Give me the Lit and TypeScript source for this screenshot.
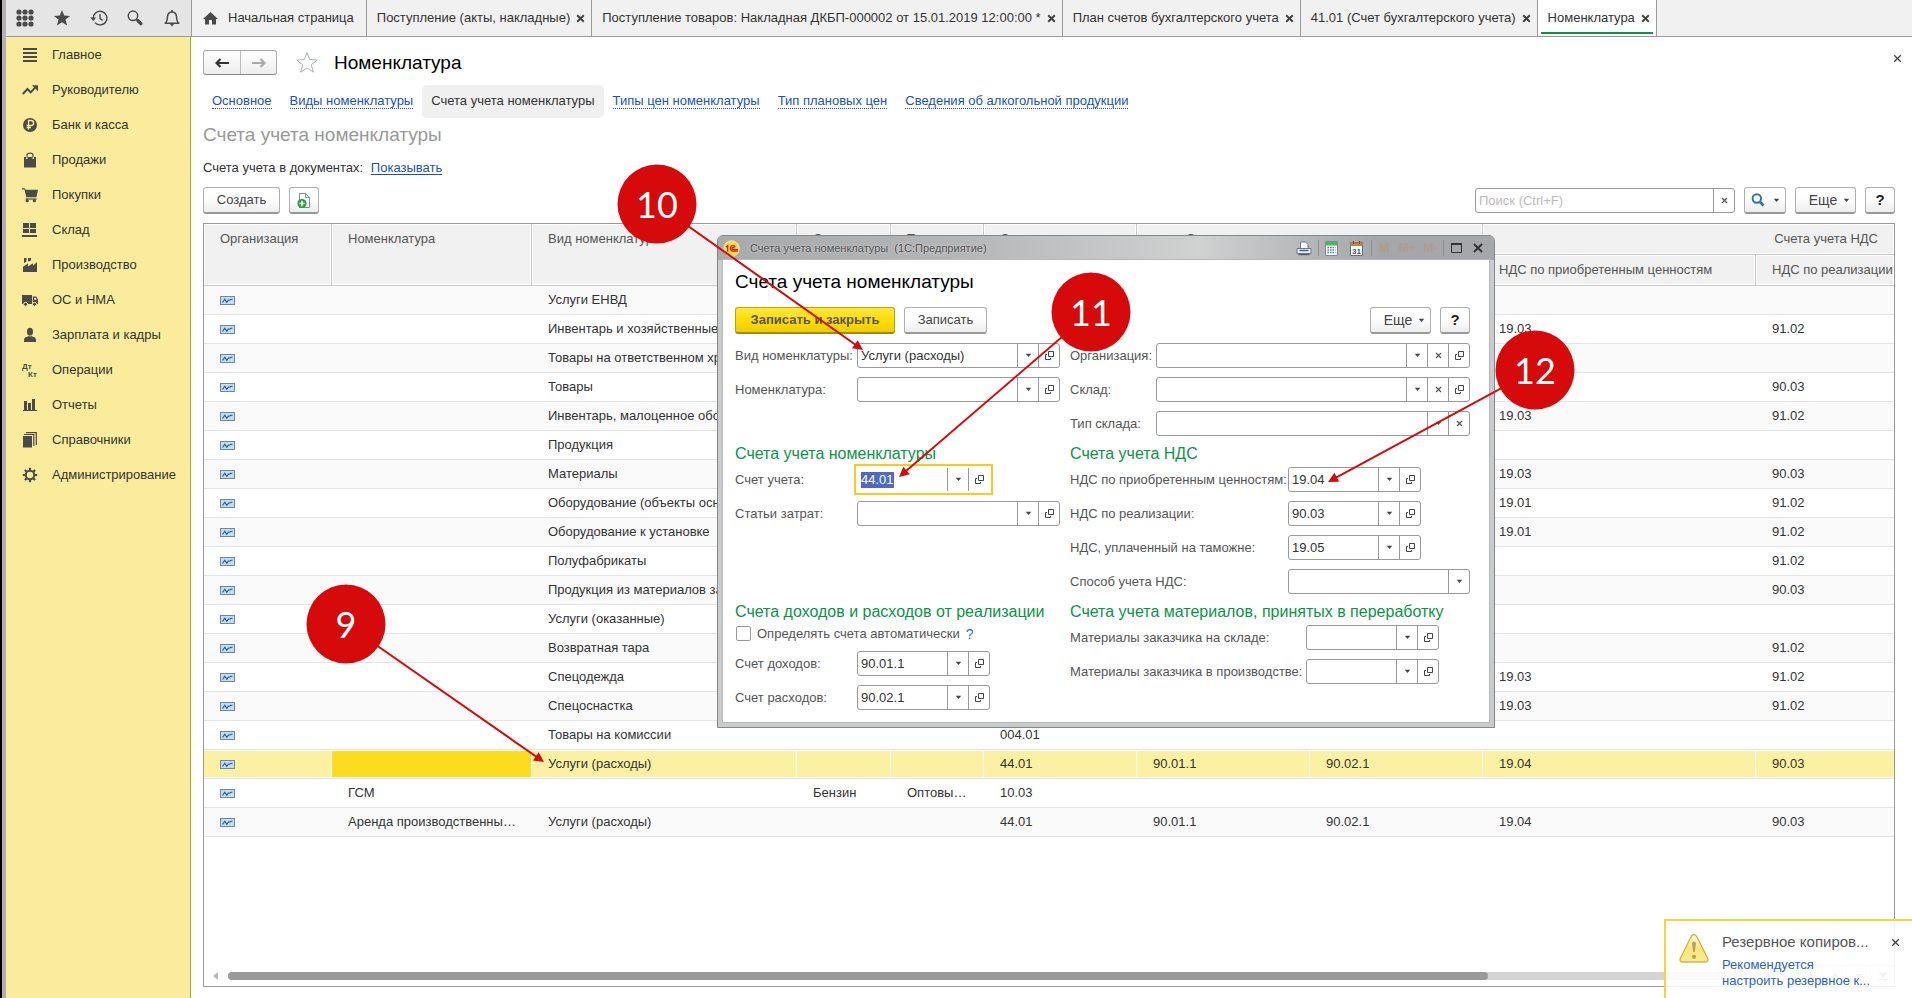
import { LitElement, html, svg, css, nothing } from "lit";
import { customElement, query } from "lit/decorators.js";
import { classMap } from "lit/directives/class-map.js";

const icon = (w: number, h: number, body: unknown) =>
  html`<svg class="ico" width=${w} height=${h} viewBox="0 0 ${w} ${h}" aria-hidden="true">${body}</svg>`;

const cross = (bold = false) =>
  icon(9, 9, svg`<path d="M1.2 1.2 7.8 7.8M7.8 1.2 1.2 7.8" fill="none" stroke="#444" stroke-width=${bold ? 2 : 1.3} />`);

const smallCross = icon(7, 7, svg`<path d="M1 1 6 6M6 1 1 6" fill="none" stroke="#555" stroke-width="1.2"/>`);
const caret = icon(7, 5, svg`<path d="M0.8 0.8h5.4L3.5 4z" fill="#444"/>`);
const openIcon = icon(11, 11, svg`<path d="M4.500 1.500h5v5h-5zM3 4.500H1.500v5h5V8" fill="none" stroke="#444"/>`);

const tools = [
  { label: "Меню", art: icon(18, 18, svg`<g fill="#4a4a4a">${[3, 9, 15].map((y) => [3, 9, 15].map((x) => svg`<circle cx=${x} cy=${y} r="2.6"/>`))}</g>`) },
  { label: "Избранное", art: icon(18, 18, svg`<path d="M9 1l2.200 5.600 5.900.3-4.600 3.700 1.600 5.900L9 13.200l-5.100 3.300 1.600-5.900L.9 6.900l5.900-.3z" fill="#4a4a4a"/>`) },
  { label: "История", art: icon(18, 18, svg`<path d="M3.300 9.500A6.800 6.800 0 1 1 5 13.600M10 5v4.600l2.600 1.800" fill="none" stroke="#4a4a4a" stroke-width="1.400"/><path d="M.2 8.500h6l-3 3.400z" fill="#4a4a4a"/>`) },
  { label: "Поиск", art: icon(18, 18, svg`<circle cx="7" cy="6.800" r="4.700" fill="none" stroke="#4a4a4a" stroke-width="1.500"/><path d="M10.300 10.300l1.800 1.600" stroke="#4a4a4a" stroke-width="1.300"/><path d="M12 11.800l2.900 2.800" stroke="#4a4a4a" stroke-width="3.400" stroke-linecap="round"/>`) },
  { label: "Уведомления", art: icon(18, 18, svg`<path d="M2.300 14.200c2-1.600 2-3 2.100-5.700C4.500 5 6.300 3.100 9 3.100s4.500 1.900 4.600 5.400c.1 2.700.1 4.100 2.100 5.700z" fill="none" stroke="#4a4a4a" stroke-width="1.500" stroke-linejoin="round"/><path d="M9 1v2" stroke="#4a4a4a" stroke-width="1.800"/><path d="M6.800 14.800h4.400L9 17.400z" fill="#4a4a4a"/>`) },
];

const tabs = [
  { text: "Поступление (акты, накладные)" },
  { text: "Поступление товаров: Накладная ДКБП-000002 от 15.01.2019 12:00:00 *" },
  { text: "План счетов бухгалтерского учета" },
  { text: "41.01 (Счет бухгалтерского учета)" },
  { text: "Номенклатура", active: true },
];

const k = "#4a4a4a";
const sections = [
  { text: "Главное", art: svg`<path d="M1 1h14v2H1zM1 5h14v2H1zM1 9h14v2H1zM1 13h14v2H1z" fill=${k}/>` },
  { text: "Руководителю", art: svg`<path d="M.8 12l4.700-5 3.200 3.400 4.600-5" fill="none" stroke=${k} stroke-width="2"/><path d="M10 3.200h6v6z" fill=${k}/>` },
  { text: "Банк и касса", art: svg`<circle cx="8" cy="8" r="7" fill=${k}/><path d="M6.500 12.500v-9h2.600a2.500 2.500 0 0 1 0 5H4.700M4.700 10.500h4.300" fill="none" stroke="#faec9c" stroke-width="1.300"/>` },
  { text: "Продажи", art: svg`<path d="M2 5h2v2h1.500V5h5v2H12V5h2v10.500H2z" fill=${k}/><path d="M5 5.500V3.200C5 1.800 6 1.200 8 1.200s3 .6 3 2v2.300" fill="none" stroke=${k} stroke-width="1.200"/>` },
  { text: "Покупки", art: svg`<path d="M0 1.200h2.800l.6 1.600H16l-1.600 7.400H4.300L2.400 2.600H0z" fill=${k}/><path d="M3.600 12h11" stroke=${k} stroke-width="1.200"/><circle cx="5.200" cy="13.700" r="1.600" fill=${k}/><circle cx="12.400" cy="13.700" r="1.600" fill=${k}/>` },
  { text: "Склад", art: svg`<path d="M1 1h6v5H1zM8 1h6v5H8zM1 7h6v4H1zM8 7h6v4H8zM0 13h15v2H0z" fill=${k}/>` },
  { text: "Производство", art: svg`<path d="M1 15V9.800l5-3.400v3l5-3.200v2.500L15 5v10zM2 1h2.500v3.500L2 6zM6 1h3v2.500L6 4.500z" fill=${k}/>` },
  { text: "ОС и НМА", art: svg`<path d="M0 3h10v9H0zM10.800 4.500h3.400L16 7.500V12h-5.200z" fill=${k}/><path d="M12 5.800h1.700l1 2H12z" fill="#faec9c"/><circle cx="3.500" cy="12.300" r="2" fill=${k} stroke="#faec9c"/><circle cx="12.500" cy="12.300" r="2" fill=${k} stroke="#faec9c"/>` },
  { text: "Зарплата и кадры", art: svg`<ellipse cx="8" cy="4.700" rx="3" ry="3.900" fill=${k}/><path d="M2 15v-2.600c0-2 2.600-2.800 4.400-3.200h3.200c1.800.4 4.400 1.200 4.400 3.200V15z" fill=${k}/>` },
  { text: "Операции", art: svg`<text x="0" y="7" font-size="8" font-weight="bold" fill=${k}>Дт</text><text x="6" y="15" font-size="8" font-weight="bold" fill=${k}>Кт</text>` },
  { text: "Отчеты", art: svg`<path d="M2 4h3v9H2zM6 6h3v7H6zM10 2h3v11h-3zM1 13h14v1H1z" fill=${k}/>` },
  { text: "Справочники", art: svg`<path d="M1 4h9v11.500H1z" fill=${k}/><path d="M2 2.500h9.800V14M4 .6h10.300V13" fill="none" stroke=${k} stroke-width="1.200"/>` },
  { text: "Администрирование", art: svg`<circle cx="8" cy="8" r="4.200" fill="none" stroke=${k} stroke-width="2"/><g stroke=${k} stroke-width="2.200">${[0, 45, 90, 135, 180, 225, 270, 315].map((a) => svg`<path d="M8 .8v2.400" transform="rotate(${a} 8 8)"/>`)}</g>` },
];

const navLinks = [
  { text: "Основное" },
  { text: "Виды номенклатуры" },
  { text: "Счета учета номенклатуры", active: true },
  { text: "Типы цен номенклатуры" },
  { text: "Тип плановых цен" },
  { text: "Сведения об алкогольной продукции" },
];

interface Row {
  item?: string; kind?: string; store?: string; storeType?: string;
  account?: string; income?: string; expense?: string; vatIn?: string; vatOut?: string; selected?: boolean;
}

const rows: Row[] = [
  { kind: "Услуги ЕНВД" },
  { kind: "Инвентарь и хозяйственные принадлежности", vatIn: "19.03", vatOut: "91.02" },
  { kind: "Товары на ответственном хранении" },
  { kind: "Товары", vatOut: "90.03" },
  { kind: "Инвентарь, малоценное оборудование", vatIn: "19.03", vatOut: "91.02" },
  { kind: "Продукция" },
  { kind: "Материалы", vatIn: "19.03", vatOut: "90.03" },
  { kind: "Оборудование (объекты основных средств)", vatIn: "19.01", vatOut: "91.02" },
  { kind: "Оборудование к установке", vatIn: "19.01", vatOut: "91.02" },
  { kind: "Полуфабрикаты", vatOut: "91.02" },
  { kind: "Продукция из материалов заказчика", vatOut: "90.03" },
  { kind: "Услуги (оказанные)" },
  { kind: "Возвратная тара", vatOut: "91.02" },
  { kind: "Спецодежда", vatIn: "19.03", vatOut: "91.02" },
  { kind: "Спецоснастка", vatIn: "19.03", vatOut: "91.02" },
  { kind: "Товары на комиссии", account: "004.01" },
  { kind: "Услуги (расходы)", account: "44.01", income: "90.01.1", expense: "90.02.1", vatIn: "19.04", vatOut: "90.03", selected: true },
  { item: "ГСМ", store: "Бензин", storeType: "Оптовый склад", account: "10.03" },
  { item: "Аренда производственных помещений", kind: "Услуги (расходы)", account: "44.01", income: "90.01.1", expense: "90.02.1", vatIn: "19.04", vatOut: "90.03" },
];

const entryIcon = icon(15, 9, svg`<rect x=".5" y=".5" width="14" height="8" fill="#c3dcf2" stroke="#6f87a0"/><path d="M2.500 6.500l2.300-3.300 2 3 1.700-2.200h1.500l1-.8h1.500" fill="none" stroke="#1c5c9c" stroke-width="1.100"/>`);

type FieldButton = "list" | "clear" | "open";
const buttonArt = { list: caret, clear: smallCross, open: openIcon };
const buttonLabel = { list: "Выбрать из списка", clear: "Очистить", open: "Открыть" };

const field = (id: string, label: string, value: string, size: string, buttons: FieldButton[], focused = false) => html`
  <div class="field">
    <label for=${id}>${label}</label>
    <div class=${classMap({ combo: true, [size]: true, focused })}>
      <input id=${id} type="text" autocomplete="off" .value=${value} />
      ${buttons.map((b) => html`<button type="button" aria-label="${buttonLabel[b]}: ${label}">${buttonArt[b]}</button>`)}
    </div>
  </div>`;

const callouts = [
  { n: 9, x: 346, y: 624, tx: 544, ty: 762 },
  { n: 10, x: 657, y: 204, tx: 863, ty: 350 },
  { n: 11, x: 1091, y: 312, tx: 899, ty: 477 },
  { n: 12, x: 1535, y: 370, tx: 1328, ty: 482 },
];

const arrow = (c: (typeof callouts)[number]) => {
  const angle = (Math.atan2(c.ty - c.y, c.tx - c.x) * 180) / Math.PI;
  const length = Math.hypot(c.ty - c.y, c.tx - c.x);
  return svg`<g transform="translate(${c.x} ${c.y}) rotate(${angle})">
    <path d="M0 0H${length - 7}" stroke="#d60a0a" stroke-width="2"/>
    <path d="M${length} 0l-10-5v10z" fill="#d60a0a"/>
  </g>`;
};

@customElement("app-root")
export class AppRoot extends LitElement {
  static styles = css`
    :host {
      display: block;
      position: relative;
      height: 100vh;
      overflow: hidden;
      background: #fff;
      color: #333;
      font: 13px/16px "Liberation Sans", Arial, sans-serif;
    }
    * { box-sizing: border-box; }
    button, input { font: inherit; color: inherit; margin: 0; }
    button { cursor: pointer; padding: 0; border: 0; background: none; display: inline-flex; align-items: center; justify-content: center; }
    input { border: 0; outline: 0; background: none; min-width: 0; }
    .ico { display: block; flex: none; }
    .app { display: flex; flex-direction: column; height: 100%; border-left: 2px solid #000; box-shadow: inset 4px 0 #b3afb3; padding-left: 4px; }
    .top { display: flex; height: 37px; flex: none; background: #f1f1f1; border-bottom: 1px solid #999; }
    .tools { width: 185px; flex: none; display: flex; align-items: center; justify-content: space-between; padding: 0 9px; background: #e5e5e5; }
    .tools button { width: 20px; height: 36px; }
    .tab { display: flex; align-items: center; gap: 6px; padding: 0 6px 0 10px; border-left: 1px solid #999; white-space: nowrap; height: 36px; }
    .tab.home { gap: 10px; padding-left: 11px; padding-right: 12px; }
    .tab.active { background: #fff; border-right: 1px solid #999; position: relative; }
    .tab.active::after { content: ""; position: absolute; left: 3px; right: 3px; bottom: 2px; height: 2px; background: #0b9447; }
    .body { flex: 1; display: flex; min-height: 0; }
    .side { width: 185px; flex: none; background: #faec9c; border-right: 1px solid #c0a416; }
    .side a { display: flex; align-items: center; gap: 14px; height: 35px; padding-left: 16px; color: #333; text-decoration: none; }
    .main { flex: 1; min-width: 0; display: flex; flex-direction: column; padding: 0 17px 11px 12px; }
    .head { height: 48px; display: flex; align-items: center; padding-top: 3px; flex: none; }
    .nav { display: flex; height: 25px; border: 1px solid #aaa; border-bottom-color: #888; border-radius: 3px; background: linear-gradient(#fff, #ededed); }
    .nav button { width: 36px; }
    .nav button + button { border-left: 1px solid #bbb; }
    .star { margin: 0 15px 0 18px; }
    h1, h2, h3 { margin: 0; font-weight: normal; }
    h1 { font-size: 19px; line-height: 24px; color: #000; flex: 1; }
    .close { width: 20px; height: 20px; margin-right: -12px; margin-top: -8px; }
    .links { display: flex; height: 33px; flex: none; }
    .links a { display: flex; align-items: center; padding: 0 9px; color: #1a52b8; text-decoration: none; white-space: nowrap; }
    .links span { border-bottom: 1px dotted #1a52b8; line-height: 14px; }
    .links a.active { background: #f0f0f0; border-radius: 5px; color: #333; }
    .links a.active span { border-color: transparent; }
    .subtitle { font-size: 19px; line-height: 33px; color: #999; flex: none; }
    .mode { line-height: 34px; flex: none; }
    .mode a { color: #1a52b8; margin-left: 4px; text-underline-offset: 2px; }
    .bar { display: flex; align-items: center; gap: 9px; height: 27px; margin: 2px 0 9px; flex: none; }
    .btn { height: 27px; border: 1px solid #b0b0b0; border-bottom: 2px solid #999; border-radius: 3px; background: linear-gradient(#fff 40%, #eee); padding: 0 12px; color: #444; }
    .btn.more { width: 61px; padding: 0 4px 0 12px; gap: 6px; font-size: 14px; }
    .btn.help { width: 30px; padding: 0; font-size: 15px; font-weight: bold; color: #222; }
    .btn.find { width: 42px; padding: 0; gap: 8px; }
    .btn.doc { width: 30px; padding: 0; }
    .btn.create { width: 77px; padding: 0; }
    .search { margin-left: auto; width: 260px; }
    .search input::placeholder { color: #bbb; opacity: 1; }
    .combo { display: flex; height: 25px; border: 1px solid #999; border-radius: 3px; background: #fff; }
    .combo input { flex: 1; padding: 0 3px; }
    .combo button { width: 21px; flex: none; border-left: 1px solid #999; }
    .grid { flex: 1; min-height: 0; border: 1px solid #999; display: flex; flex-direction: column; overflow: hidden; }
    table { width: 100%; table-layout: fixed; border-collapse: separate; border-spacing: 0; }
    .c1 { width: 128px; } .c2 { width: 200px; } .c3 { width: 265px; } .c4 { width: 94px; } .c5 { width: 93px; }
    .c6 { width: 153px; } .c7 { width: 173px; } .c8 { width: 173px; } .c9 { width: 273px; }
    th, td { padding: 0 12px 0 16px; text-align: left; font-weight: normal; white-space: nowrap; overflow: hidden; text-overflow: ellipsis; }
    th { background: #f1f1f1; color: #555; height: 31px; border-right: 1px solid #c8c8c8; border-bottom: 1px solid #c8c8c8; box-shadow: inset 0 0 0 1px #fff; }
    th.tall { vertical-align: top; padding-top: 7px; height: 61px; }
    th.center { text-align: center; }
    th.last { border-right: 0; padding-right: 0; }
    th.right { text-align: right; padding-right: 16px; border-right: 0; }
    td { height: 29px; border-bottom: 1px solid #e4e4e4; }
    tr:nth-child(odd) td { background: #fafafa; }
    tr.selected td { background: #fcf0a2; border-right: 1px solid #fff; box-shadow: inset 0 1px #fff, inset 0 -1px #fff; }
    tr.selected td.current { background: #fcdc1e; }
    tr.selected td:last-child { border-right: 0; }
    .scroll { margin-top: auto; height: 21px; display: flex; align-items: center; padding-left: 9px; gap: 10px; flex: none; }
    .track { width: 1528px; flex: 0 1 auto; height: 8px; border-radius: 4px; background: #d4d4d4; }
    .thumb { width: 1260px; max-width: 83%; height: 8px; border-radius: 4px; background: #999; }
    .steps { display: flex; margin-left: auto; align-self: stretch; border-top: 1px solid #ccc; }
    .steps button { width: 24px; border-left: 1px solid #ccc; }

    .dialog { position: absolute; left: 717px; top: 235px; width: 778px; border: 1px solid #858789; border-radius: 6px 6px 0 0; background: #c9cbcd; padding: 0 5px 5px; }
    .caption { display: flex; align-items: center; height: 24px; margin: 0 -5px; padding: 0 5px; font-size: 11px; color: #555; border-radius: 5px 5px 0 0; background: linear-gradient(90deg, #a8aaac, #b4b5b7 30%, #d0d1d1 62%, #a4a6a9 85%, #a6a7aa); white-space: pre; }
    .caption .name { flex: 1; margin-left: 10px; text-shadow: 0 0 3px #ddd; }
    .caption button { height: 22px; width: 22px; }
    .caption .sep { width: 1px; height: 16px; background: #8c8e90; margin: 0 1px; }
    .caption .mem { width: 23px; color: #b09c90; font-weight: bold; font-size: 12px; }
    .caption .print { width: 26px; }
    .caption .cal { width: 28px; }
    .sheet { background: #fff; padding: 0 19px 12px 12px; box-shadow: 0 0 0 1px #b6b8ba; }
    .sheet h2 { font-size: 19px; line-height: 44px; color: #000; }
    .cmds { display: flex; gap: 9px; margin-top: 3px; margin-bottom: 9px; }
    .cmds .primary { width: 160px; padding: 0; font-weight: bold; color: #555; background: linear-gradient(#ffe83c, #ffdc00 55%, #f0cc00); border-color: #c0a010; border-bottom-color: #a08a10; }
    .cmds .save { width: 83px; padding: 0; }
    .cmds .more { margin-left: auto; }
    form { display: grid; grid-template-columns: 325px minmax(0, 1fr); column-gap: 10px; }
    fieldset { border: 0; margin: 0; padding: 0; min-width: 0; display: flex; flex-direction: column; gap: 9px; }
    .group { display: flex; flex-direction: column; min-width: 0; }
    h3 { font-size: 16px; line-height: 22px; padding: 7px 0 2px; color: #0b9447; white-space: nowrap; }
    .field { display: flex; align-items: center; height: 25px; color: #555; }
    .field label { width: 122px; flex: none; white-space: nowrap; }
    .field input { color: #333; }
    .narrow label { width: 86px; }
    .vat label { width: 218px; }
    .mat label { width: 236px; }
    .long { width: 203px; }
    .fill { flex: 1; min-width: 0; }
    .short { width: 133px; }
    .focused { border-color: transparent; border-radius: 0; outline: 2px solid #fcc91e; outline-offset: 1px; }
    .focused input::selection { background: #5069c4; color: #fff; }
    .check { display: flex; align-items: center; height: 17px; margin-bottom: 9px; color: #555; }
    .check input { appearance: none; width: 15px; height: 15px; border: 1px solid #999; border-radius: 2px; margin: 0 6px 0 1px; }
    .check a { color: #1a7ac0; text-decoration: none; margin-left: 6px; font-size: 14px; }

    .toast { position: absolute; right: 0; bottom: 0; width: 248px; height: 79px; border: solid #fcd23c; border-width: 2px 0 0 2px; background: rgba(255, 255, 255, 0.87); display: grid; grid-template-columns: 56px 1fr 34px; padding-top: 11px; }
    .toast .warn { margin: 1px 0 0 13px; }
    .toast strong { font-weight: normal; font-size: 15px; line-height: 20px; color: #555; display: block; }
    .toast a { color: #2c62be; text-decoration: none; line-height: 16px; display: block; margin-top: 5px; white-space: nowrap; }
    .toast button { height: 20px; }
    .marks { position: absolute; left: 0; top: 0; width: 100%; height: 100%; pointer-events: none; }
    .marks text { font: 36px Lato, sans-serif; fill: #fff; text-anchor: middle; }
  `;

  @query("#account") private account!: HTMLInputElement;

  firstUpdated() {
    this.account.focus();
    this.account.select();
  }

  private renderTop() {
    return html`<header class="top">
      <div class="tools">${tools.map((t) => html`<button aria-label=${t.label}>${t.art}</button>`)}</div>
      <div class="tab home">
        ${icon(15, 14, svg`<path d="M7.500 1 15 8h-2v5.500H9V9H6v4.500H2V8H0z" fill="#4a4a4a"/>`)}
        <span>Начальная страница</span>
      </div>
      ${tabs.map((t) => html`<div class=${classMap({ tab: true, active: !!t.active })}>
        <span>${t.text}</span><button aria-label="Закрыть вкладку">${cross(true)}</button>
      </div>`)}
    </header>`;
  }

  private renderTable() {
    return html`<div class="grid">
      <table>
        <colgroup>${[1, 2, 3, 4, 5, 6, 7, 8, 9, 10].map((n) => html`<col class="c${n}" />`)}</colgroup>
        <thead>
          <tr>
            <th class="tall" rowspan="2">Организация</th>
            <th class="tall" rowspan="2">Номенклатура</th>
            <th class="tall" rowspan="2">Вид номенклатуры</th>
            <th class="tall" rowspan="2">Склад</th>
            <th class="tall" rowspan="2">Тип склада</th>
            <th class="tall" rowspan="2">Счет учета</th>
            <th class="center" colspan="2">Счета доходов и расходов от реализации</th>
            <th class="right" colspan="2">Счета учета НДС</th>
          </tr>
          <tr><th>Доходов</th><th>Расходов</th><th>НДС по приобретенным ценностям</th><th class="last">НДС по реализации</th></tr>
        </thead>
        <tbody>
          ${rows.map((r) => html`<tr class=${r.selected ? "selected" : nothing}>
            <td>${entryIcon}</td>
            <td class=${r.selected ? "current" : nothing}>${r.item}</td>
            <td>${r.kind}</td><td>${r.store}</td><td>${r.storeType}</td><td>${r.account}</td>
            <td>${r.income}</td><td>${r.expense}</td><td>${r.vatIn}</td><td>${r.vatOut}</td>
          </tr>`)}
        </tbody>
      </table>
      <div class="scroll">
        ${icon(5, 8, svg`<path d="M5 0v8L0 4z" fill="#bbb"/>`)}
        <div class="track"><div class="thumb"></div></div>
        ${icon(5, 8, svg`<path d="M0 0v8l5-4z" fill="#999"/>`)}
        <div class="steps">
          <button aria-label="В начало">${icon(10, 8, svg`<path d="M0 1h10M5 2l4 5H1z" stroke="#999" fill="#999"/>`)}</button>
          <button aria-label="Вверх">${icon(10, 8, svg`<path d="M5 1l4 5H1z" fill="#999"/>`)}</button>
          <button aria-label="Вниз">${icon(10, 8, svg`<path d="M5 7l4-5H1z" fill="#999"/>`)}</button>
          <button aria-label="В конец">${icon(10, 8, svg`<path d="M0 7.500h10M5 5l4-4H1z" stroke="#999" fill="#999"/>`)}</button>
        </div>
      </div>
    </div>`;
  }

  private renderDialog() {
    return html`<section class="dialog" role="dialog" aria-labelledby="dialog-title">
      <div class="caption">
        ${icon(17, 17, svg`<circle cx="8.500" cy="8.500" r="7.800" fill="#fbdc4a" stroke="#f3e9a0"/><path d="M2.800 7.200l1.900-1.500v6M12.300 6.800a2.700 2.700 0 1 0-2.200 4.300h5M11.300 8.300a1.100 1.100 0 1 0-1.100 1.300h4.800" fill="none" stroke="#d81c1c" stroke-width="1.300"/>`)}
        <span class="name">Счета учета номенклатуры  (1С:Предприятие)</span>
        <button class="print" aria-label="Печать">${icon(16, 15, svg`<path d="M4.500 7V1h5l2.500 2.500V7" fill="#fff" stroke="#667a90"/><path d="M1 7.500h14v5H1z" fill="#e8eef4" stroke="#667a90"/><path d="M3.500 9.500h9M2.500 13.500h11" stroke="#50647c" stroke-width="1.500"/>`)}</button>
        <span class="sep"></span>
        <button aria-label="Калькулятор">${icon(13, 15, svg`<path d="M.5.500h12v14H.5z" fill="#f4f6f8" stroke="#7c8a96"/><path d="M1 1h11v3.500H1z" fill="#48bc50"/><path d="M2.500 6.500h8M2.500 9h8M2.500 11.500h8" stroke="#6a7c90" stroke-width="1.500" stroke-dasharray="1.500 1"/>`)}</button>
        <button class="cal" aria-label="Календарь">${icon(13, 15, svg`<path d="M.5 1.500h12v13H.5z" fill="#fff" stroke="#5c7088"/><path d="M.5 1.500h12V5H.5z" fill="#c88040"/><path d="M3.500 0v3M9.500 0v3" stroke="#884c20"/><text x="2" y="12.500" font-size="8" font-weight="bold" fill="#445870">31</text>`)}</button>
        <span class="sep"></span>
        <button class="mem">M</button><button class="mem">M+</button><button class="mem">M-</button>
        <span class="sep"></span>
        <button aria-label="Развернуть">${icon(11, 10, svg`<path d="M.5 1h10v8.500H.5z" fill="none" stroke="#333"/><path d="M0 1h11" stroke="#333" stroke-width="2"/>`)}</button>
        <button aria-label="Закрыть окно">${icon(10, 10, svg`<path d="M1 1l8 8M9 1 1 9" stroke="#333" stroke-width="2"/>`)}</button>
      </div>
      <div class="sheet">
        <h2 id="dialog-title">Счета учета номенклатуры</h2>
        <div class="cmds">
          <button class="btn primary">Записать и закрыть</button>
          <button class="btn save">Записать</button>
          <button class="btn more">Еще ${caret}</button>
          <button class="btn help" aria-label="Справка">?</button>
        </div>
        <form @submit=${(e: Event) => e.preventDefault()}>
          <fieldset>
            ${field("kind", "Вид номенклатуры:", "Услуги (расходы)", "long", ["list", "open"])}
            ${field("item", "Номенклатура:", "", "long", ["list", "open"])}
          </fieldset>
          <fieldset class="narrow">
            ${field("org", "Организация:", "", "fill", ["list", "clear", "open"])}
            ${field("store", "Склад:", "", "fill", ["list", "clear", "open"])}
            ${field("store-type", "Тип склада:", "", "fill", ["list", "clear"])}
          </fieldset>
          <div class="group">
            <h3>Счета учета номенклатуры</h3>
            <fieldset>
              ${field("account", "Счет учета:", "44.01", "short", ["list", "open"], true)}
              ${field("costs", "Статьи затрат:", "", "long", ["list", "open"])}
            </fieldset>
          </div>
          <div class="group vat">
            <h3>Счета учета НДС</h3>
            <fieldset>
              ${field("vat-in", "НДС по приобретенным ценностям:", "19.04", "short", ["list", "open"])}
              ${field("vat-out", "НДС по реализации:", "90.03", "short", ["list", "open"])}
              ${field("vat-customs", "НДС, уплаченный на таможне:", "19.05", "short", ["list", "open"])}
              ${field("vat-mode", "Способ учета НДС:", "", "fill", ["list"])}
            </fieldset>
          </div>
          <div class="group">
            <h3>Счета доходов и расходов от реализации</h3>
            <div class="check">
              <input id="auto" type="checkbox" /><label for="auto">Определять счета автоматически</label><a href="#help">?</a>
            </div>
            <fieldset>
              ${field("income", "Счет доходов:", "90.01.1", "short", ["list", "open"])}
              ${field("expense", "Счет расходов:", "90.02.1", "short", ["list", "open"])}
            </fieldset>
          </div>
          <div class="group mat">
            <h3>Счета учета материалов, принятых в переработку</h3>
            <fieldset>
              ${field("mat-store", "Материалы заказчика на складе:", "", "short", ["list", "open"])}
              ${field("mat-prod", "Материалы заказчика в производстве:", "", "short", ["list", "open"])}
            </fieldset>
          </div>
        </form>
      </div>
    </section>`;
  }

  render() {
    return html`
      <div class="app">
        ${this.renderTop()}
        <div class="body">
          <nav class="side">${sections.map((s) => html`<a href="#section">${icon(16, 16, s.art)}<span>${s.text}</span></a>`)}</nav>
          <main class="main">
            <div class="head">
              <div class="nav">
                <button aria-label="Назад">${icon(14, 10, svg`<path d="M14 5H3M5.500 1 1.500 5l4 4" fill="none" stroke="#333" stroke-width="2.200"/>`)}</button>
                <button aria-label="Вперед">${icon(14, 10, svg`<path d="M0 5h11M8.500 1l4 4-4 4" fill="none" stroke="#aaa" stroke-width="2.200"/>`)}</button>
              </div>
              <button class="star" aria-label="В избранное">${icon(24, 23, svg`<path d="M12 1.500l2.700 7.200 7.600.3-6 4.800 2.100 7.400L12 17l-6.400 4.200 2.100-7.400-6-4.800 7.600-.3z" fill="#fff" stroke="#aab0b8"/>`)}</button>
              <h1>Номенклатура</h1>
              <button class="close" aria-label="Закрыть">${cross()}</button>
            </div>
            <nav class="links">${navLinks.map((l) => html`<a href="#link" class=${l.active ? "active" : nothing}><span>${l.text}</span></a>`)}</nav>
            <h2 class="subtitle">Счета учета номенклатуры</h2>
            <div class="mode">Счета учета в документах: <a href="#mode">Показывать</a></div>
            <div class="bar">
              <button class="btn create">Создать</button>
              <button class="btn doc" aria-label="Создать копированием">${icon(14, 17, svg`<path d="M2.500 1.500h6l4 4v10h-10z" fill="#fff" stroke="#7890a4"/><path d="M8.500 1.500v4h4" fill="none" stroke="#7890a4"/><circle cx="5" cy="11.500" r="4.600" fill="#2a9c34"/><path d="M5 8.800v5.400M2.300 11.500h5.400" stroke="#fff" stroke-width="1.600"/>`)}</button>
              <div class="combo search">
                <input type="text" aria-label="Поиск" placeholder="Поиск (Ctrl+F)" /><button aria-label="Очистить поиск">${smallCross}</button>
              </div>
              <button class="btn find" aria-label="Найти">${icon(14, 14, svg`<circle cx="5.800" cy="5.500" r="4.200" fill="none" stroke="#2c74ac" stroke-width="2"/><path d="M9 9l3.500 3.500" stroke="#2c74ac" stroke-width="2.600"/>`)}${caret}</button>
              <button class="btn more">Еще ${caret}</button>
              <button class="btn help" aria-label="Справка">?</button>
            </div>
            ${this.renderTable()}
          </main>
        </div>
      </div>
      ${this.renderDialog()}
      <aside class="toast">
        <div class="warn">${icon(30, 31, svg`<defs><linearGradient id="w" x2="0" y2="1"><stop offset="0" stop-color="#fffbe0"/><stop offset=".5" stop-color="#fbe878"/><stop offset="1" stop-color="#fbe98c"/></linearGradient></defs><path d="M15 1.500c1.400 0 2.200 1 3 2.500l10.500 21c.9 2 .4 4-2 4h-23c-2.400 0-2.900-2-2-4L12 4c.8-1.500 1.600-2.500 3-2.500z" fill="url(#w)" stroke="#d4b44c" stroke-width="1.500"/><path d="M13 10q2-3 4 0l-1.200 9h-1.600z" fill="#b49c74"/><circle cx="15" cy="23.800" r="2.100" fill="#b49c74"/>`)}</div>
        <div><strong>Резервное копиров...</strong><a href="#backup">Рекомендуется<br />настроить резервное к...</a></div>
        <button aria-label="Закрыть уведомление">${cross()}</button>
      </aside>
      <svg class="marks" aria-hidden="true">
        ${callouts.map(arrow)}
        ${callouts.map((c) => svg`<circle cx=${c.x} cy=${c.y} r="39.500" fill="#d60a0a"/><text x=${c.x} y=${c.y + 14}>${c.n}</text>`)}
      </svg>`;
  }
}
